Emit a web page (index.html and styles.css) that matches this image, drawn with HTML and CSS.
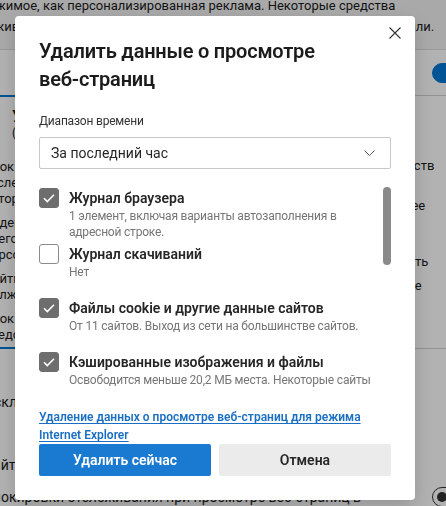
FILE: index.html
```html
<!DOCTYPE html>
<html lang="ru">
<head>
  <meta charset="UTF-8" />
  <title>Настройки — конфиденциальность</title>
  <link rel="stylesheet" href="styles.css">
</head>
<body>

<!-- Страница настроек (под диалогом) -->
<div class="page">
  <p class="lead">содержимое, как персонализированная реклама. Некоторые средства отслеживания собирают сведения о вас на сайтах, которые вы не посещали.</p>

  <div class="tracking">
    <div class="tracking-head">
      <span>Предотвращение отслеживания</span>
      <span class="switch on"></span>
    </div>

    <div class="levels">
      <div class="level selected">
        <div class="level-title">Уравновешенная</div>
        <div class="level-sub">(рекомендуется)</div>
        <ul>
          <li>Блокирует средства<br>отслеживания с сайтов,<br>которые вы не посещали</li>
          <li>Содержимое и реклама, скорее<br>всего, будут менее персонализированы</li>
          <li>Сайты будут работать<br>должным образом</li>
          <li>Блокирует известные опасные<br>средства отслеживания</li>
        </ul>
      </div>
      <div class="level">
        <div class="level-title">Строгая</div>
        <div class="level-sub">&nbsp;</div>
        <ul>
          <li>Блокирует большинство средств отслеживания на всех сайтах</li>
          <li>Содержимое и реклама, скорее всего, будут минимально персонализированы</li>
          <li>Части сайтов могут не работать</li>
          <li>Блокирует известные опасные средства отслеживания</li>
        </ul>
      </div>
    </div>

    <div class="setting first">
      <span>Исключения</span>
    </div>
    <div class="setting second">
      <span>Сайты, на которых разрешено отслеживание</span>
    </div>
    <div class="setting third">
      <span>Блокировки отслеживания при просмотре веб-страниц в режиме InPrivate</span>
      <span class="switch"></span>
    </div>
  </div>
</div>

<!-- Диалог удаления данных -->
<div class="overlay">
  <div class="dialog" role="dialog">
    <button class="close" aria-label="Закрыть">
      <svg width="12" height="12" viewBox="0 0 12 12"><path d="M0.5 0.5l11 11M11.5 0.5l-11 11" stroke="#333" stroke-width="1.1" fill="none"/></svg>
    </button>

    <h2 class="dialog-title">Удалить данные о просмотре <span class="nowrap">веб-страниц</span></h2>

    <div class="field-label">Диапазон времени</div>
    <div class="select">
      <span>За последний час</span>
      <svg width="11" height="6" viewBox="0 0 11 6"><path d="M0.5 0.5l5 5 5-5" fill="none" stroke="#555" stroke-width="1"/></svg>
    </div>

    <div class="options-wrap">
      <div class="options">
        <label class="option">
          <span class="box checked"><svg width="20" height="20" viewBox="0 0 20 20"><path d="M5 10.3l3.3 3.3L15 6.8" fill="none" stroke="#fff" stroke-width="1.6"/></svg></span>
          <span class="option-text">
            <span class="option-title">Журнал браузера</span>
            <span class="option-desc">1 элемент, включая варианты автозаполнения в адресной строке.</span>
          </span>
        </label>
        <label class="option">
          <span class="box"></span>
          <span class="option-text">
            <span class="option-title">Журнал скачиваний</span>
            <span class="option-desc">Нет</span>
          </span>
        </label>
        <label class="option">
          <span class="box checked"><svg width="20" height="20" viewBox="0 0 20 20"><path d="M5 10.3l3.3 3.3L15 6.8" fill="none" stroke="#fff" stroke-width="1.6"/></svg></span>
          <span class="option-text">
            <span class="option-title">Файлы cookie и другие данные сайтов</span>
            <span class="option-desc">От 11 сайтов. Выход из сети на большинстве сайтов.</span>
          </span>
        </label>
        <label class="option">
          <span class="box checked"><svg width="20" height="20" viewBox="0 0 20 20"><path d="M5 10.3l3.3 3.3L15 6.8" fill="none" stroke="#fff" stroke-width="1.6"/></svg></span>
          <span class="option-text">
            <span class="option-title">Кэшированные изображения и файлы</span>
            <span class="option-desc">Освободится меньше 20,2 МБ места. Некоторые сайты могут загружаться медленнее.</span>
          </span>
        </label>
        <label class="option">
          <span class="box"></span>
          <span class="option-text">
            <span class="option-title">Пароли</span>
            <span class="option-desc">Нет</span>
          </span>
        </label>
        <label class="option">
          <span class="box"></span>
          <span class="option-text">
            <span class="option-title">Данные автозаполнения форм</span>
            <span class="option-desc">Нет</span>
          </span>
        </label>
        <label class="option">
          <span class="box"></span>
          <span class="option-text">
            <span class="option-title">Разрешения для сайтов</span>
            <span class="option-desc">Нет</span>
          </span>
        </label>
      </div>
      <span class="thumb"></span>
    </div>

    <p class="ie"><a href="#">Удаление данных о просмотре веб-страниц для режима <span class="nowrap">Internet Explorer</span></a></p>

    <div class="actions">
      <button class="btn primary">Удалить сейчас</button>
      <button class="btn">Отмена</button>
    </div>
  </div>
</div>

</body>
</html>
```

FILE: styles.css
```css
* {
  box-sizing: border-box;
}
body {
  margin: 0;
  width: 446px;
  height: 506px;
  overflow: hidden;
  background: #f3f3f3;
  color: #1b1b1b;
  font-family: "Segoe UI", Roboto, "Noto Sans", sans-serif;
}
.nowrap {
  white-space: nowrap;
}

/* страница настроек */
.page {
  width: 512px;
  margin: -5px 0 0 -40px;
  font-size: 13px;
}
.lead {
  width: 480px;
  margin: 0;
  line-height: 21px;
}
.tracking {
  margin-top: 12px;
  padding-left: 24px;
  background: #fff;
  border-top: 1px solid #dcdcdc;
}
.tracking-head {
  height: 45px;
  display: flex;
  align-items: center;
  justify-content: space-between;
  padding-left: 40px;
}
.switch {
  flex: none;
  position: relative;
  width: 40px;
  height: 20px;
  border: 1px solid #333;
  border-radius: 10px;
}
.switch::after {
  content: "";
  position: absolute;
  top: 4px;
  left: 4px;
  width: 10px;
  height: 10px;
  border-radius: 50%;
  background: #333;
}
.switch.on {
  background: #0078d4;
  border-color: #0078d4;
}
.switch.on::after {
  left: auto;
  right: 4px;
  background: #fff;
}
.levels {
  display: flex;
  gap: 12px;
  margin: 0 14px 0 -14px;
}
.level {
  flex: 1;
  height: 254px;
  padding: 10px 14px;
  border: 1px solid #d1d1d1;
  border-radius: 6px;
}
.level.selected {
  flex: 0 0 235px;
  padding: 10px 12px;
  border: 2px solid #0078d4;
}
.level-title {
  padding-left: 28px;
  font-size: 17px;
  font-weight: 600;
  line-height: 18px;
}
.level-sub {
  padding-left: 28px;
  font-size: 12px;
  line-height: 16px;
}
.level ul {
  list-style: none;
  margin: 18px 0 0;
  padding: 0;
  font-size: 13px;
  line-height: 16px;
}
.level li + li {
  margin-top: 8px;
}
.setting {
  display: flex;
  align-items: flex-start;
  justify-content: space-between;
  gap: 24px;
  font-size: 14px;
  line-height: 20px;
}
.setting.first {
  padding-top: 43px;
}
.setting.second {
  margin-top: 43px;
}
.setting.third {
  margin-top: 12px;
}

/* затемнение и диалог */
.overlay {
  position: fixed;
  inset: 0;
  padding: 16px 0 0 15px;
  background: rgba(0, 0, 0, 0.3);
}
.dialog {
  position: relative;
  width: 400px;
  padding: 21px 24px 24px;
  background: #fff;
  border-radius: 4px;
  box-shadow: 0 6px 20px rgba(0, 0, 0, 0.18);
  color: #262626;
}
.close {
  position: absolute;
  top: 1px;
  right: 4px;
  width: 32px;
  height: 32px;
  padding: 0;
  border: none;
  background: none;
  display: flex;
  align-items: center;
  justify-content: center;
}
.dialog-title {
  margin: 0;
  font-size: 20px;
  line-height: 28px;
  font-weight: 600;
  letter-spacing: -0.2px;
  color: #1b1b1b;
}
.field-label {
  margin-top: 20px;
  font-size: 12px;
  line-height: 16px;
  letter-spacing: -0.2px;
  color: #333;
}
.select {
  margin-top: 8px;
  height: 32px;
  display: flex;
  align-items: center;
  justify-content: space-between;
  padding: 0 15px 0 11px;
  border: 1px solid #c8c8c8;
  border-radius: 2px;
  font-size: 14px;
}

/* список с прокруткой */
.options-wrap {
  position: relative;
  margin-top: 16px;
}
.options {
  height: 205px;
  padding: 3px 8px 0 0;
  overflow: hidden;
}
.thumb {
  position: absolute;
  top: 2px;
  right: 0;
  width: 8px;
  height: 78px;
  border-radius: 4px;
  background: #8a8a8a;
}
.option {
  display: flex;
  gap: 10px;
  min-height: 50px;
  margin-bottom: 4px;
}
.box {
  flex: none;
  width: 20px;
  height: 20px;
  border: 1px solid #8a8a8a;
  border-radius: 3px;
  background: #fff;
}
.box.checked {
  border-color: #6e6e6e;
  background: #6e6e6e;
}
.box svg {
  display: block;
  margin: -1px;
}
.option-text {
  padding-right: 4px;
}
.option-title {
  display: block;
  font-size: 14px;
  line-height: 20px;
  font-weight: 600;
  color: #262626;
}
.option-desc {
  display: block;
  font-size: 12px;
  line-height: 16px;
  letter-spacing: -0.2px;
  color: #767676;
}
.ie {
  margin: 18px 0 0;
  font-size: 12px;
  line-height: 18px;
  font-weight: 600;
}
.ie a {
  color: #1a6fc3;
  text-decoration: underline;
  text-underline-offset: 2px;
}
.actions {
  display: flex;
  gap: 8px;
}
.btn {
  flex: 1;
  height: 32px;
  border: none;
  border-radius: 2px;
  font-family: inherit;
  font-size: 14px;
  font-weight: 600;
  background: #ebebeb;
  color: #262626;
}
.btn.primary {
  background: #1a79d1;
  color: #fff;
}
```
